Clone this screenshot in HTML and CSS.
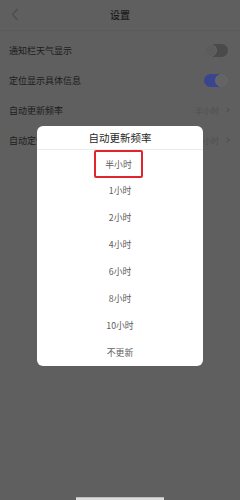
FILE: index.html
```html
<!DOCTYPE html>
<html lang="zh">
<head>
<meta charset="utf-8">
<title>设置</title>
<link rel="stylesheet" href="styles.css">
</head>
<body>
<div class="screen">
  <header class="topbar">
    <span class="back"><svg width="8" height="13" viewBox="0 0 8 13"><path d="M6.5 1 L1.5 6.5 L6.5 12" fill="none" stroke="#4c4c4c" stroke-width="1.2"/></svg></span>
    <h1 class="title">设置</h1>
  </header>
  <ul class="list">
    <li class="row"><span class="label">通知栏天气显示</span><span class="switch"><span class="knob"></span></span></li>
    <li class="row"><span class="label">定位显示具体信息</span><span class="switch on"><span class="knob"></span></span></li>
    <li class="row"><span class="label">自动更新频率</span><span class="value">半小时<i class="chev"></i></span></li>
    <li class="row"><span class="label">自动定位更新频率</span><span class="value">1小时<i class="chev"></i></span></li>
  </ul>
  <div class="home-bar"></div>

  <div class="scrim">
    <div class="dialog">
      <div class="dlg-title">自动更新频率</div>
      <ul class="options">
        <li class="opt"><span class="mark">半小时</span></li>
        <li class="opt">1小时</li>
        <li class="opt">2小时</li>
        <li class="opt">4小时</li>
        <li class="opt">6小时</li>
        <li class="opt">8小时</li>
        <li class="opt">10小时</li>
        <li class="opt">不更新</li>
      </ul>
    </div>
  </div>
</div>
</body>
</html>
```

FILE: styles.css
```css
* { box-sizing: border-box; }
html, body { margin: 0; padding: 0; }
body {
  background: #5f5f5f;
  font-family: "Noto Sans CJK SC", "Noto Sans", sans-serif;
}
.screen {
  position: relative;
  width: 240px;
  height: 500px;
  overflow: hidden;
  display: flex;
  flex-direction: column;
  background: #5f5f5f;
}
.topbar {
  height: 31px;
  display: flex;
  align-items: center;
  justify-content: center;
  position: relative;
  border-bottom: 1px solid #5a5a5a;
}
.back {
  position: absolute;
  left: 11px;
  top: 8px;
  display: flex;
}
.title {
  margin: 0;
  font-size: 10px;
  font-weight: 500;
  color: #1a1a1a;
  line-height: 1;
}
.list {
  list-style: none;
  margin: 4px 0 0;
  padding: 0;
}
.row {
  height: 30px;
  display: flex;
  align-items: center;
  justify-content: space-between;
  padding: 0 11px 0 9px;
}
.label {
  font-size: 9px;
  color: #1c1c1c;
}
.switch {
  width: 24px;
  height: 13px;
  border-radius: 7px;
  background: #4a4a4a;
  position: relative;
  display: block;
  margin-right: 1px;
}
.switch .knob {
  position: absolute;
  left: 0;
  top: 0;
  width: 13px;
  height: 13px;
  border-radius: 50%;
  background: #5c5c5c;
  border: 1px solid #666;
}
.switch.on { background: #3a4590; }
.switch.on .knob { left: auto; right: 0; background: #646464; border-color: #6c6c6c; }
.value {
  font-size: 8px;
  color: #505050;
  display: flex;
  align-items: center;
  gap: 6px;
}
.chev {
  width: 4px;
  height: 4px;
  border-top: 1px solid #525252;
  border-right: 1px solid #525252;
  transform: rotate(45deg);
}
.home-bar {
  margin-top: auto;
  align-self: center;
  width: 88px;
  height: 3px;
  background: #dcdcdc;
  border-top: 1px solid #bcbcbc;
}
.scrim {
  position: absolute;
  inset: 0;
}
.dialog {
  position: absolute;
  left: 37px;
  top: 126px;
  width: 166px;
  background: #fff;
  border-radius: 6px;
  overflow: hidden;
}
.dlg-title {
  height: 24px;
  display: flex;
  align-items: center;
  justify-content: center;
  font-size: 10.5px;
  color: #2a2a2a;
  border-bottom: 1px solid #ececec;
}
.options {
  list-style: none;
  margin: 0;
  padding: 0;
}
.opt {
  height: 27px;
  display: flex;
  align-items: center;
  justify-content: center;
  font-size: 8.8px;
  color: #606060;
}
.mark {
  width: 49px;
  height: 28px;
  margin-top: 1px;
  display: flex;
  align-items: center;
  justify-content: center;
  border: 2px solid #e0262c;
  border-radius: 2px;
  margin-left: -3px;
}
```
